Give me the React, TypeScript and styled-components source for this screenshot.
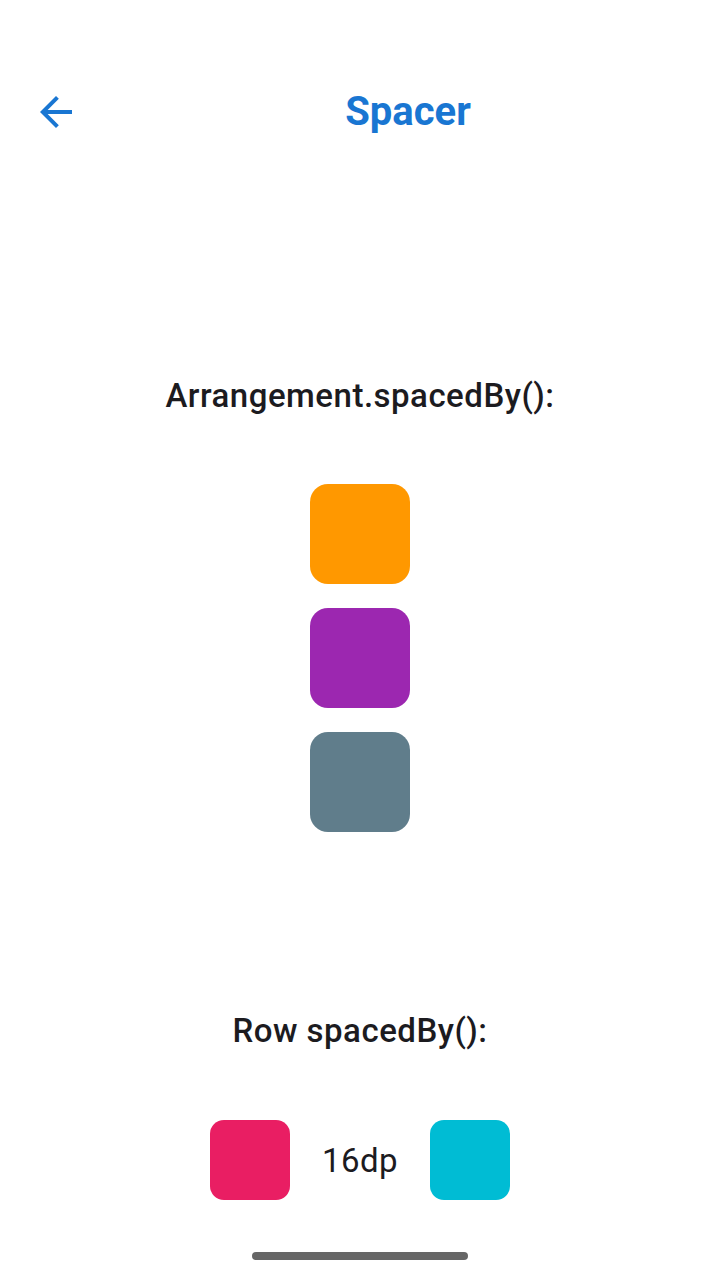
import React from "react";
import styled, { createGlobalStyle } from "styled-components";

const GlobalStyle = createGlobalStyle`
  html, body {
    margin: 0;
    padding: 0;
    background: #ffffff;
  }
  body {
    font-family: Roboto, "Noto Sans", sans-serif;
  }
`;

const Screen = styled.div`
  width: 720px;
  height: 1280px;
  display: flex;
  flex-direction: column;
  align-items: center;
  background: #ffffff;
  overflow: hidden;
`;

const TopBar = styled.div`
  width: 100%;
  margin-top: 56px;
  height: 112px;
  display: flex;
  align-items: center;
`;

const NavButton = styled.button`
  width: 48px;
  height: 48px;
  margin: 0 16px 0 32px;
  padding: 0;
  border: none;
  background: transparent;
  display: flex;
  align-items: center;
  justify-content: center;
  color: #1976d2;
  cursor: pointer;
`;

const Title = styled.h1`
  flex: 1;
  margin: 0;
  text-align: center;
  font-size: 40px;
  line-height: 48px;
  font-weight: 700;
  color: #1976d2;
`;

const Heading = styled.h2<{ $top: number }>`
  margin: ${(p) => p.$top}px 0 0;
  font-size: 33px;
  line-height: 44px;
  font-weight: 500;
  color: #1c1b1f;
  letter-spacing: 0.5px;
`;

const BoxColumn = styled.div`
  margin-top: 66px;
  display: flex;
  flex-direction: column;
  gap: 24px;
`;

const Box = styled.div<{ $color: string; $size: number; $radius: number }>`
  width: ${(p) => p.$size}px;
  height: ${(p) => p.$size}px;
  border-radius: ${(p) => p.$radius}px;
  background: ${(p) => p.$color};
`;

const BoxRow = styled.div`
  margin-top: 67px;
  display: flex;
  align-items: center;
  gap: 32px;
`;

const RowLabel = styled.span`
  font-size: 33px;
  font-weight: 400;
  letter-spacing: 0.5px;
  color: #1c1b1f;
`;

const HomeIndicator = styled.div`
  margin-top: 52px;
  width: 216px;
  height: 8px;
  border-radius: 4px;
  background: #666666;
`;

const BackArrow = () => (
  <svg width="48" height="48" viewBox="0 0 24 24" fill="currentColor">
    <path d="M20 11H7.83l5.59-5.59L12 4l-8 8 8 8 1.41-1.41L7.83 13H20v-2z" />
  </svg>
);

export default function App() {
  return (
    <>
      <GlobalStyle />
      <Screen>
        <TopBar>
          <NavButton aria-label="Back">
            <BackArrow />
          </NavButton>
          <Title>Spacer</Title>
        </TopBar>

        <Heading $top={206}>Arrangement.spacedBy():</Heading>
        <BoxColumn>
          <Box $color="#ff9800" $size={100} $radius={18} />
          <Box $color="#9c27b0" $size={100} $radius={18} />
          <Box $color="#607d8b" $size={100} $radius={18} />
        </BoxColumn>

        <Heading $top={177}>Row spacedBy():</Heading>
        <BoxRow>
          <Box $color="#e91e63" $size={80} $radius={14} />
          <RowLabel>16dp</RowLabel>
          <Box $color="#00bcd4" $size={80} $radius={14} />
        </BoxRow>

        <HomeIndicator />
      </Screen>
    </>
  );
}
